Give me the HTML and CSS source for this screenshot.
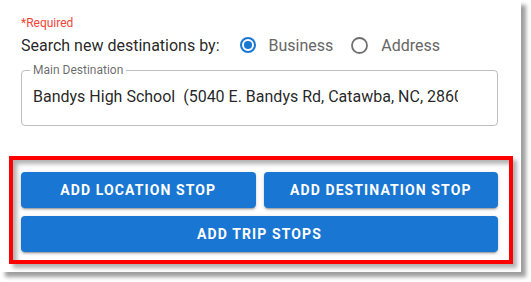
FILE: index.html
```html
<!DOCTYPE html>
<html>
<head>
<meta charset="utf-8">
<link rel="stylesheet" href="styles.css">
</head>
<body>
<div class="card">
  <div class="required">*Required</div>
  <div class="search-row">
    <span class="search-label">Search new destinations by:</span>
    <span class="option">
      <svg class="radio" width="16" height="16" viewBox="0 0 16 16"><circle cx="8" cy="8" r="7" fill="none" stroke="#1976d2" stroke-width="2"/><circle cx="8" cy="8" r="4" fill="#1976d2"/></svg>
      <span class="option-text">Business</span>
    </span>
    <span class="option">
      <svg class="radio" width="17" height="17" viewBox="0 0 17 17"><circle cx="8.5" cy="8.5" r="7.5" fill="none" stroke="#6f6f6f" stroke-width="1.8"/></svg>
      <span class="option-text">Address</span>
    </span>
  </div>
  <fieldset class="field">
    <legend class="field-label">Main Destination</legend>
    <div class="field-input">Bandys High School&nbsp; (5040 E. Bandys Rd, Catawba, NC, 28609)</div>
  </fieldset>
  <div class="buttons">
    <button class="btn">Add Location Stop</button>
    <button class="btn">Add Destination Stop</button>
    <button class="btn btn-wide">Add Trip Stops</button>
  </div>
</div>
<div class="highlight"></div>
</body>
</html>
```

FILE: styles.css
```css
html, body {
  margin: 0;
  padding: 0;
  background: #fff;
}
body {
  position: relative;
  width: 531px;
  height: 282px;
  overflow: hidden;
  font-family: Roboto, "Liberation Sans", sans-serif;
}
.card {
  width: 521px;
  height: 272px;
  box-sizing: border-box;
  padding: 15px 23px 0 21px;
  background: #fff;
  box-shadow: 5px 5px 4px rgba(0, 0, 0, 0.38);
  display: flex;
  flex-direction: column;
}
.required {
  font-size: 12px;
  line-height: 16px;
  color: #f44336;
}
.search-row {
  display: flex;
  align-items: center;
  height: 28px;
  font-size: 16px;
}
.search-label {
  color: rgba(0, 0, 0, 0.87);
  margin-right: 20px;
}
.option {
  display: flex;
  align-items: center;
  margin-right: 18px;
}
.radio {
  display: block;
  margin-right: 13px;
}
.option-text {
  color: #666;
}
.field {
  margin: 4px 0 0 0;
  padding: 0 8px 8px 8px;
  border: 1px solid rgba(0, 0, 0, 0.25);
  border-radius: 4px;
  min-width: 0;
}
.field-label {
  padding: 0 3px;
  font-size: 12px;
  line-height: 14px;
  color: rgba(0, 0, 0, 0.6);
}
.field-input {
  height: 40px;
  line-height: 40px;
  padding-left: 3px;
  margin-right: 31px;
  font-size: 16px;
  color: rgba(0, 0, 0, 0.87);
  white-space: nowrap;
  overflow: hidden;
}
.buttons {
  margin-top: 46px;
  display: grid;
  grid-template-columns: 1fr 1fr;
  gap: 8px;
}
.btn {
  height: 36px;
  border: none;
  border-radius: 4px;
  background: #1976d2;
  color: #fff;
  font-family: Roboto, "Liberation Sans", sans-serif;
  font-size: 14px;
  font-weight: 700;
  letter-spacing: 1.1px;
  text-transform: uppercase;
  box-shadow: 0 3px 1px -2px rgba(0,0,0,.2), 0 2px 2px 0 rgba(0,0,0,.14), 0 1px 5px 0 rgba(0,0,0,.12);
  padding: 0;
}
.btn-wide {
  grid-column: 1 / 3;
}
.highlight {
  position: absolute;
  left: 9px;
  top: 156px;
  width: 504px;
  height: 108px;
  box-sizing: border-box;
  border: 4px solid #ff0000;
  box-shadow: 4px 4px 4px rgba(0, 0, 0, 0.3), inset 4px 4px 4px rgba(0, 0, 0, 0.3);
  pointer-events: none;
}
```
